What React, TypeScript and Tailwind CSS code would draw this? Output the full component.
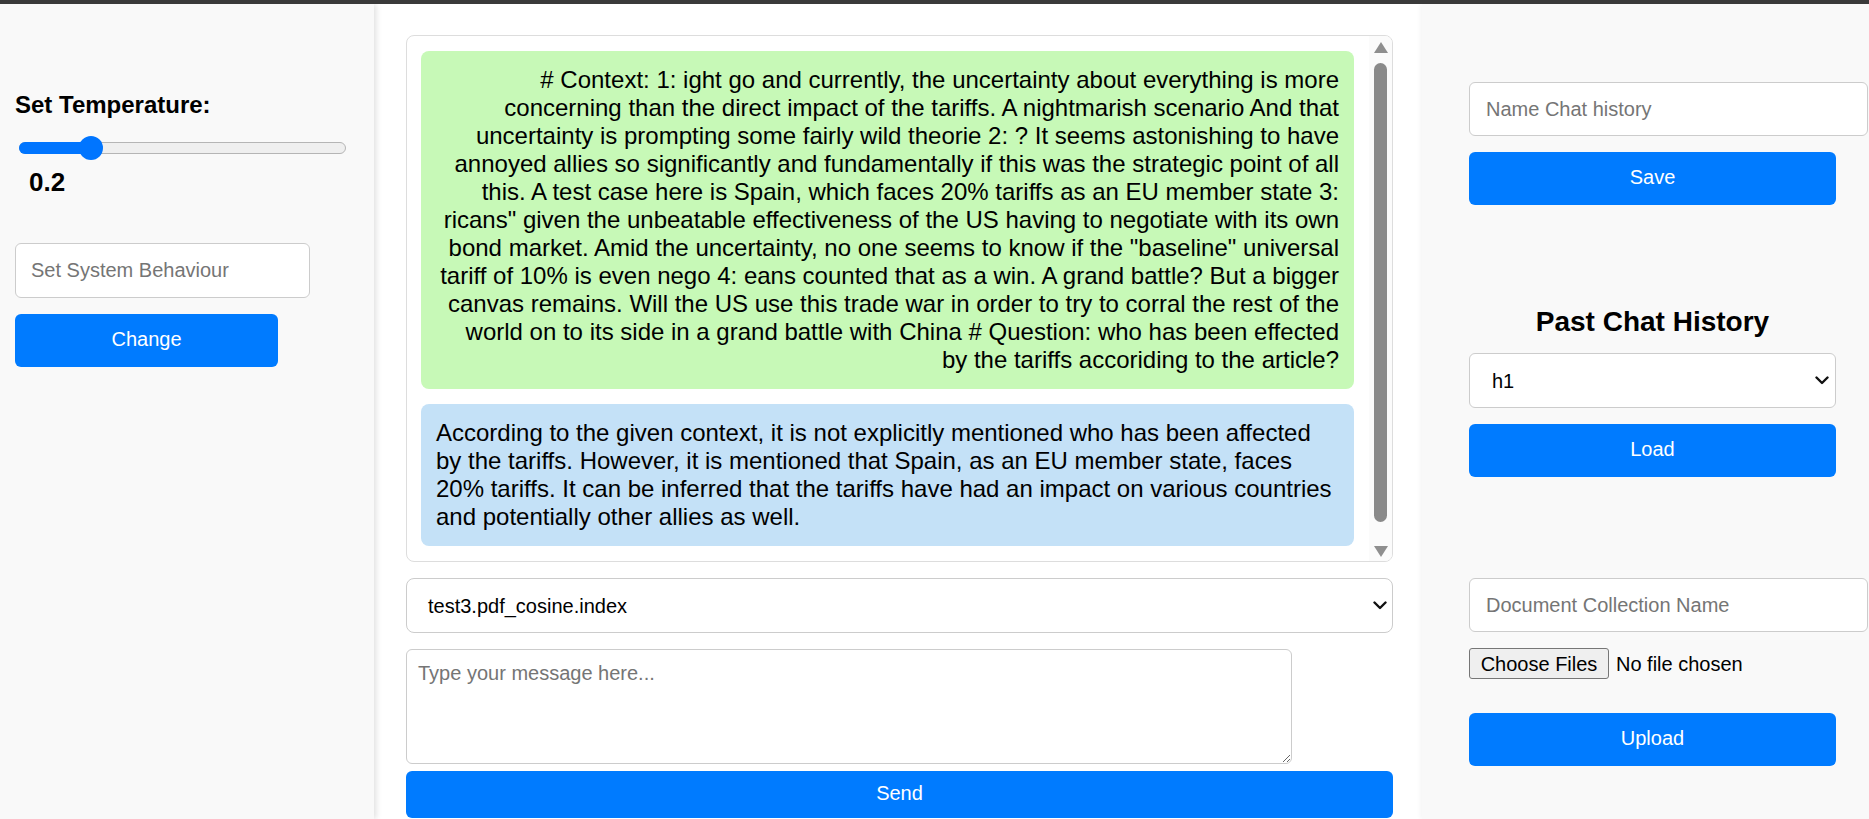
import React from "react";

const FONT = { fontFamily: '"Liberation Sans", Arial, sans-serif' };

const question =
  '# Context: 1: ight go and currently, the uncertainty about everything is more concerning than the direct impact of the tariffs. A nightmarish scenario And that uncertainty is prompting some fairly wild theorie 2: ? It seems astonishing to have annoyed allies so significantly and fundamentally if this was the strategic point of all this. A test case here is Spain, which faces 20% tariffs as an EU member state 3: ricans" given the unbeatable effectiveness of the US having to negotiate with its own bond market. Amid the uncertainty, no one seems to know if the "baseline" universal tariff of 10% is even nego 4: eans counted that as a win. A grand battle? But a bigger canvas remains. Will the US use this trade war in order to try to corral the rest of the world on to its side in a grand battle with China # Question: who has been effected by the tariffs accoriding to the article?';

const answer =
  "According to the given context, it is not explicitly mentioned who has been affected by the tariffs. However, it is mentioned that Spain, as an EU member state, faces 20% tariffs. It can be inferred that the tariffs have had an impact on various countries and potentially other allies as well.";

function Chevron() {
  return (
    <svg width="14" height="9" viewBox="0 0 14 9" fill="none">
      <path d="M1.5 1.5 L7 7 L12.5 1.5" stroke="#111" strokeWidth="2.4" strokeLinecap="round" strokeLinejoin="round" />
    </svg>
  );
}

function BlueButton({ text, className }: { text: string; className: string }) {
  return (
    <button className={`rounded-[6px] bg-[#007bff] pb-[3px] text-white text-[20px] ${className}`}>
      {text}
    </button>
  );
}

function LeftPanel() {
  return (
    <aside className="relative z-10 w-[374px] shrink-0 bg-[#f9f9f9] pl-[15px] pt-[87px] shadow-[2px_0_6px_rgba(0,0,0,0.13)]">
      <h4 className="text-[24px] leading-[28px] font-bold text-black">Set Temperature:</h4>
      <div className="relative ml-[4px] mt-[17px] h-[24px] w-[327px]">
        <div className="absolute left-0 top-[6px] h-[12px] w-full rounded-full border border-[#b5b5b5] bg-[#efefef]" />
        <div className="absolute left-0 top-[6px] h-[12px] w-[74px] rounded-full bg-[#0075ff]" />
        <div className="absolute left-[60px] top-0 h-[24px] w-[24px] rounded-full bg-[#0075ff]" />
      </div>
      <div className="ml-[14px] mt-[7px] text-[26px] leading-[30px] font-bold text-black">0.2</div>
      <input
        className="mt-[46px] block h-[55px] w-[295px] rounded-[6px] border border-[#cccccc] bg-white px-[15px] text-[20px] outline-none placeholder:text-[#757575]"
        placeholder="Set System Behaviour"
      />
      <BlueButton text="Change" className="mt-[16px] block h-[53px] w-[263px]" />
    </aside>
  );
}

function ScrollTrack() {
  return (
    <div className="flex w-[23px] shrink-0 flex-col items-center bg-[#fbfbfb] pt-[6px]">
      <svg width="14" height="11" viewBox="0 0 14 11">
        <polygon points="7,0 14,11 0,11" fill="#8f8f8f" />
      </svg>
      <div className="mt-[10px] h-[459px] w-[13px] rounded-full bg-[#8a8a8a]" />
      <svg className="mt-[24px]" width="14" height="11" viewBox="0 0 14 11">
        <polygon points="0,0 14,0 7,11" fill="#8f8f8f" />
      </svg>
    </div>
  );
}

function ChatPanel() {
  return (
    <main className="w-[1048px] shrink-0 overflow-hidden bg-white pl-[32px] pt-[31px]">
      <div className="flex h-[527px] w-[987px] overflow-hidden rounded-[8px] border border-[#dddddd]">
        <div className="flex flex-1 flex-col gap-[15px] pl-[14px] pr-[15px] pt-[15px]">
          <div className="rounded-[8px] bg-[#c7f9b7] p-[15px] text-right text-[24px] leading-[28px] text-black">
            {question}
          </div>
          <div className="rounded-[8px] bg-[#c4e1f7] p-[15px] text-left text-[24px] leading-[28px] text-black">
            {answer}
          </div>
        </div>
        <ScrollTrack />
      </div>

      <div className="mt-[16px] flex h-[55px] w-[987px] items-center justify-between rounded-[8px] border border-[#cccccc] bg-white pl-[21px] pr-[5px] text-[20px] text-black">
        <span>test3.pdf_cosine.index</span>
        <Chevron />
      </div>

      <textarea
        className="mt-[16px] block h-[115px] w-[886px] rounded-[6px] border border-[#cccccc] bg-white px-[11px] pt-[8px] text-[20px] outline-none placeholder:text-[#757575]"
        placeholder="Type your message here..."
      />

      <BlueButton text="Send" className="mt-[7px] block h-[47px] w-[987px]" />
    </main>
  );
}

function RightPanel() {
  return (
    <aside className="flex-1 overflow-hidden bg-[#f9f9f9] pl-[47px] pt-[78px] shadow-[-2px_0_4px_rgba(0,0,0,0.04)]">
      <input
        className="block h-[54px] w-[399px] rounded-[6px] border border-[#cccccc] bg-white px-[16px] text-[20px] outline-none placeholder:text-[#757575]"
        placeholder="Name Chat history"
      />
      <BlueButton text="Save" className="mt-[16px] block h-[53px] w-[367px]" />

      <h3 className="mt-[101px] w-[367px] text-center text-[28px] leading-[32px] font-bold text-black">
        Past Chat History
      </h3>
      <div className="mt-[15px] flex h-[55px] w-[367px] items-center justify-between rounded-[6px] border border-[#cccccc] bg-white pl-[22px] pr-[6px] text-[20px] text-black">
        <span>h1</span>
        <Chevron />
      </div>
      <BlueButton text="Load" className="mt-[16px] block h-[53px] w-[367px]" />

      <input
        className="mt-[101px] block h-[54px] w-[399px] rounded-[6px] border border-[#cccccc] bg-white px-[16px] text-[20px] outline-none placeholder:text-[#757575]"
        placeholder="Document Collection Name"
      />
      <div className="mt-[16px] flex items-center gap-[7px] text-[20px] text-black">
        <button className="h-[31px] w-[140px] rounded-[3px] border border-[#767676] bg-[#efefef] text-[20px] leading-none">
          Choose Files
        </button>
        <span>No file chosen</span>
      </div>
      <BlueButton text="Upload" className="mt-[34px] block h-[53px] w-[367px]" />
    </aside>
  );
}

export default function App() {
  return (
    <div className="flex h-[819px] w-full flex-col overflow-hidden bg-white" style={FONT}>
      <div className="h-[4px] shrink-0 bg-[#3a3a3a]" />
      <div className="flex flex-1 overflow-hidden">
        <LeftPanel />
        <ChatPanel />
        <RightPanel />
      </div>
    </div>
  );
}
